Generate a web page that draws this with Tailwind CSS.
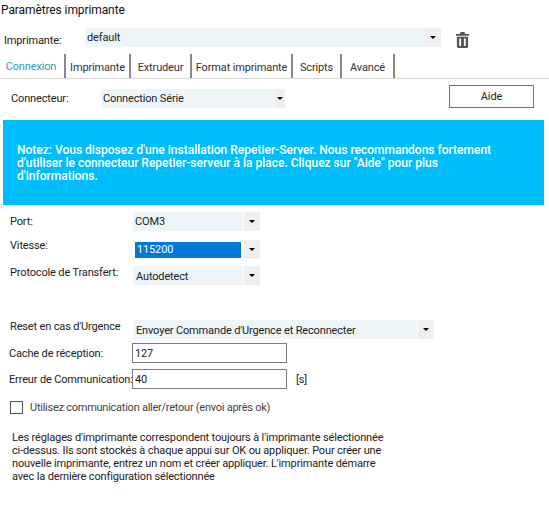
<!DOCTYPE html>
<html lang="fr">
<head>
  <meta charset="UTF-8" />
  <title>Paramètres imprimante</title>
  <script src="https://cdn.jsdelivr.net/npm/@tailwindcss/browser@4"></script>
</head>
<body class="bg-white w-[549px] h-[528px] overflow-hidden font-['Roboto','Open_Sans',sans-serif] text-[11px] tracking-[-0.15px] text-[#222] leading-none whitespace-nowrap">

  <!-- Title -->
  <h1 class="h-[28px] pl-[1px] pt-[3px] text-[12px] tracking-[-0.1px] font-normal leading-[14px] text-[#111]">Paramètres imprimante</h1>

  <!-- Printer select -->
  <div class="flex items-center h-[19px] pl-[4px]">
    <span class="w-[81px] pt-[5px]">Imprimante:</span>
    <div class="flex items-center w-[356px] h-[19px] bg-[#eef5f8]">
      <span class="flex-1 pl-[2px]">default</span>
      <span class="flex items-center justify-center w-[16px] h-[19px] bg-[#efefef]"><span class="border-x-[3px] border-t-[3px] border-x-transparent border-t-black"></span></span>
    </div>
    <svg class="ml-[14px] mt-[5px]" width="15" height="16" viewBox="0 0 16 17" fill="#50555c">
      <path d="M6 0h4l1 2h4v2H1V2h4zM2 5h12v10.500q0 1.500-1.500 1.500h-9Q2 17 2 15.500zM4.500 7v8h2V7zM9.500 7v8h2V7z" fill-rule="evenodd" />
    </svg>
  </div>

  <!-- Tabs -->
  <div class="flex items-end h-[32px] border-b border-[#d9d9d9] text-[#333]">
    <span class="flex items-center justify-center w-[66px] h-[24px] pr-[2px] text-[#2d9cb4] border-r-2 border-[#888]">Connexion</span>
    <span class="flex items-center justify-center w-[65px] h-[24px] pt-[2px] border-r-2 border-[#888]">Imprimante</span>
    <span class="flex items-center justify-center w-[61px] h-[24px] pt-[2px] border-r-2 border-[#888]">Extrudeur</span>
    <span class="flex items-center justify-center w-[101px] h-[24px] pt-[2px] border-r-2 border-[#888]">Format imprimante</span>
    <span class="flex items-center justify-center w-[49px] h-[24px] pt-[2px] border-r-2 border-[#888]">Scripts</span>
    <span class="flex items-center justify-center w-[53px] h-[24px] pt-[2px] border-r-2 border-[#888]">Avancé</span>
  </div>

  <!-- Panel -->
  <div class="pl-[3px] pr-[5px]">
    <div class="flex items-center h-[30px] pl-[8px] pt-[8px]">
      <span class="w-[90px]">Connecteur:</span>
      <div class="flex items-center w-[184px] h-[19px] bg-[#eef5f8]">
        <span class="flex-1 pl-[2px]">Connection Série</span>
        <span class="flex items-center justify-center w-[10px] h-[19px] bg-[#efefef]"><span class="border-x-[3px] border-t-[3px] border-x-transparent border-t-black"></span></span>
      </div>
      <button class="ml-[164px] -mt-[3px] w-[85px] h-[23px] border border-[#2f8f9c] bg-white">Aide</button>
    </div>

    <div class="h-[85px] mt-[11px] bg-[#00bdfb] pl-[14px] pr-[50px] pt-[24px] text-white text-[12px] tracking-normal font-medium leading-[13px] whitespace-normal">
      Notez: Vous disposez d'une installation Repetier-Server. Nous recommandons fortement d'utiliser le connecteur Repetier-serveur à la place. Cliquez sur "Aide" pour plus d'informations.
    </div>

    <div class="flex flex-col pl-[7px] pt-[7px]">
      <div class="flex h-[19px]">
        <span class="w-[123px] pt-[4px]">Port:</span>
        <div class="flex items-center w-[127px] h-[19px]">
          <span class="flex-1 flex items-center h-[19px] pl-[2px] mr-[1px] bg-[#eef5f8]">COM3</span>
          <span class="flex items-center justify-center w-[16px] h-[19px] bg-[#efefef]"><span class="border-x-[3px] border-t-[3px] border-x-transparent border-t-black"></span></span>
        </div>
      </div>
      <div class="flex h-[19px] mt-[9px]">
        <span class="w-[123px]">Vitesse:</span>
        <div class="flex items-center w-[127px] h-[19px]">
          <span class="flex-1 flex items-center h-[16px] pl-[2px] ml-[2px] mr-[3px] bg-[#0078d7] text-white">115200</span>
          <span class="flex items-center justify-center w-[16px] h-[19px] bg-[#efefef]"><span class="border-x-[3px] border-t-[3px] border-x-transparent border-t-black"></span></span>
        </div>
      </div>
      <div class="flex h-[19px] mt-[7px]">
        <span class="w-[123px] pt-[1px]">Protocole de Transfert:</span>
        <div class="flex items-center w-[127px] h-[19px]">
          <span class="flex-1 flex items-center h-[19px] pl-[3px] pt-[1px] mr-[1px] bg-[#eef5f8]">Autodetect</span>
          <span class="flex items-center justify-center w-[16px] h-[19px] bg-[#efefef]"><span class="border-x-[3px] border-t-[3px] border-x-transparent border-t-black"></span></span>
        </div>
      </div>
    </div>

    <div class="flex h-[19px] mt-[35px] pl-[7px]">
      <span class="w-[123px] pt-[1px]">Reset en cas d'Urgence</span>
      <div class="flex items-center w-[301px] h-[19px]">
        <span class="flex-1 flex items-center h-[19px] pl-[3px] pt-[1px] mr-[1px] bg-[#eef5f8]">Envoyer Commande d'Urgence et Reconnecter</span>
        <span class="flex items-center justify-center w-[16px] h-[19px] bg-[#efefef]"><span class="border-x-[3px] border-t-[3px] border-x-transparent border-t-black"></span></span>
      </div>
    </div>
    <div class="flex items-center h-[20px] mt-[4px] pl-[6px]">
      <span class="w-[123px]">Cache de réception:</span>
      <span class="flex items-center w-[155px] h-[20px] pl-[2px] border border-[#7a7a7a]">127</span>
    </div>
    <div class="flex items-center h-[20px] mt-[6px] pl-[6px]">
      <span class="w-[123px]">Erreur de Communication:</span>
      <span class="flex items-center w-[155px] h-[20px] pl-[2px] border border-[#7a7a7a]">40</span>
      <span class="ml-[9px]">[s]</span>
    </div>
    <div class="flex items-center h-[13px] mt-[12px] pl-[7px] text-[#444] tracking-[-0.25px]">
      <span class="w-[13px] h-[13px] border border-[#555] bg-white"></span>
      <span class="ml-[7px]">Utilisez communication aller/retour (envoi après ok)</span>
    </div>

    <p class="w-[385px] mt-[17px] pl-[9px] leading-[13px] whitespace-normal">Les réglages d'imprimante correspondent toujours à l'imprimante sélectionnée ci-dessus. Ils sont stockés à chaque appui sur OK ou appliquer. Pour créer une nouvelle imprimante, entrez un nom et créer appliquer. L'imprimante démarre avec la dernière configuration sélectionnée</p>
  </div>
</body>
</html>
